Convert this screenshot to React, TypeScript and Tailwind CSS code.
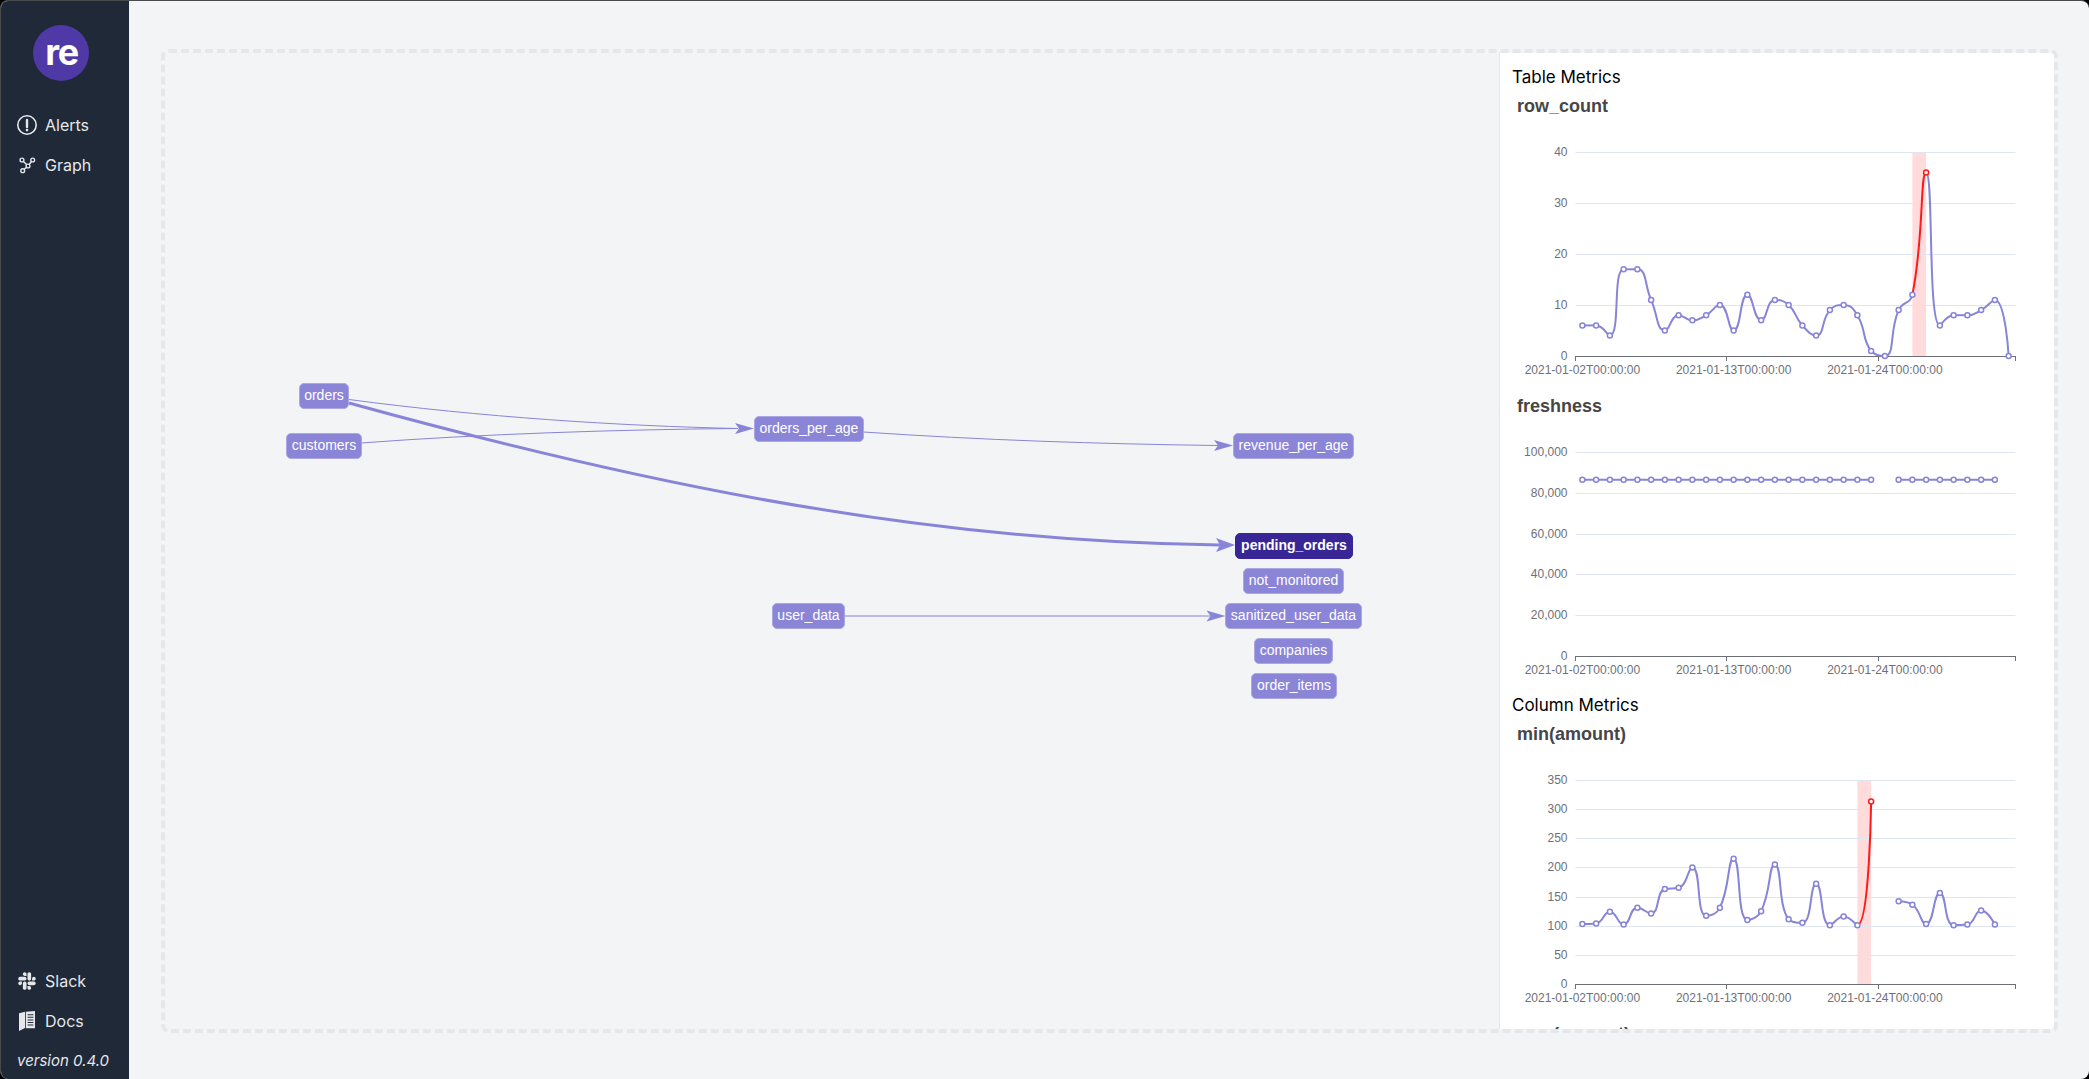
import { FaSlack } from 'react-icons/fa';

const BLUE = '#8884d8';
const RED = '#ff1a1a';

type Metric = {
  title: string;
  max: number;
  ticks: number[];
  values: (number | null)[];
  anomaly?: number;
};

const rowCount: (number | null)[] = [6, 6, 4, 17, 17, 11, 5, 8, 7, 8, 10, 5, 12, 7, 11, 10, 6, 4, 9, 10, 8, 1, 0, 9, 12, 36, 6, 8, 8, 9, 11, 0];
const freshness: (number | null)[] = Array.from({ length: 31 }, (_, i) => (i === 22 ? null : 86400));
const minAmount: (number | null)[] = [103, 104, 124, 102, 131, 121, 163, 165, 200, 117, 131, 215, 110, 125, 205, 111, 105, 172, 101, 116, 101, 313, null, 142, 136, 103, 156, 101, 102, 126, 102];

const CHARTS: Record<string, Metric> = {
  rowCount: { title: 'row_count', max: 40, ticks: [0, 10, 20, 30, 40], values: rowCount, anomaly: 25 },
  freshness: { title: 'freshness', max: 100000, ticks: [0, 20000, 40000, 60000, 80000, 100000], values: freshness },
  minAmount: { title: 'min(amount)', max: 350, ticks: [0, 50, 100, 150, 200, 250, 300, 350], values: minAmount, anomaly: 21 },
};

const AXIS_LEFT = 75.5;
const AXIS_RIGHT = 515.5;
const TOP = 65;
const BOTTOM = 269;
const STEP = 13.75;
const xOf = (i: number) => AXIS_LEFT + STEP / 2 + i * STEP;

// same control point maths as a smooth echarts line
function segments(points: [number, number][], smooth = 0.5) {
  const out: { from: [number, number]; c1: [number, number]; c2: [number, number]; to: [number, number] }[] = [];
  let cp0: [number, number] = points[0];
  for (let i = 1; i < points.length; i++) {
    const [x, y] = points[i];
    const [px, py] = points[i - 1];
    const next = points[i + 1];
    let cp1: [number, number] = [x, y];
    let nextCp: [number, number] = [x, y];
    if (next) {
      const [nx, ny] = next;
      const lenPrev = Math.hypot(x - px, y - py);
      const lenNext = Math.hypot(nx - x, ny - y);
      const ratio = lenNext / (lenNext + lenPrev || 1);
      let cx = x + (nx - px) * smooth * ratio;
      let cy = y + (ny - py) * smooth * ratio;
      cx = Math.max(Math.min(cx, Math.max(nx, x)), Math.min(nx, x));
      cy = Math.max(Math.min(cy, Math.max(ny, y)), Math.min(ny, y));
      let vx = cx - x;
      let vy = cy - y;
      let bx = x - (vx * lenPrev) / (lenNext || 1);
      let by = y - (vy * lenPrev) / (lenNext || 1);
      bx = Math.max(Math.min(bx, Math.max(px, x)), Math.min(px, x));
      by = Math.max(Math.min(by, Math.max(py, y)), Math.min(py, y));
      vx = x - bx;
      vy = y - by;
      cp1 = [bx, by];
      nextCp = [x + (vx * lenNext) / (lenPrev || 1), y + (vy * lenNext) / (lenPrev || 1)];
    }
    out.push({ from: points[i - 1], c1: cp0, c2: cp1, to: [x, y] });
    cp0 = nextCp;
  }
  return out;
}

function Chart({ metric }: { metric: Metric }) {
  const { title, max, ticks, values, anomaly } = metric;
  const yOf = (v: number) => BOTTOM - (v / max) * (BOTTOM - TOP);

  // split on the missing days, the line has a hole there
  const runs: { start: number; pts: [number, number][] }[] = [];
  values.forEach((v, i) => {
    if (v === null) return;
    const last = runs[runs.length - 1];
    if (last && last.start + last.pts.length === i) last.pts.push([xOf(i), yOf(v)]);
    else runs.push({ start: i, pts: [[xOf(i), yOf(v)]] });
  });

  return (
    <svg width="553" height="300" className="block shrink-0 font-['Liberation_Sans',sans-serif]">
      <text x="17" y="25" fontSize="18" fontWeight="700" fill="#464646">{title}</text>
      {anomaly !== undefined && (
        <rect x={xOf(anomaly - 1)} y={TOP} width={STEP} height={BOTTOM - TOP} fill="#ff0000" fillOpacity="0.14" />
      )}
      {ticks.map(t => (
        <g key={t}>
          {t > 0 && <line x1={AXIS_LEFT} x2={AXIS_RIGHT} y1={Math.round(yOf(t)) + 0.5} y2={Math.round(yOf(t)) + 0.5} stroke="#e0e6f1" />}
          <text x={AXIS_LEFT - 8} y={yOf(t) + 4} fontSize="12" textAnchor="end" fill="#6e7079">{t.toLocaleString('en-US')}</text>
        </g>
      ))}
      <line x1={AXIS_LEFT} x2={AXIS_RIGHT} y1={BOTTOM + 0.5} y2={BOTTOM + 0.5} stroke="#6e7079" />
      {[0, 11, 22, 32].map(i => {
        const x = Math.round(AXIS_LEFT + i * STEP - 0.5) + 0.5;
        return <line key={i} x1={x} x2={x} y1={BOTTOM} y2={BOTTOM + 5} stroke="#6e7079" />;
      })}
      {['2021-01-02T00:00:00', '2021-01-13T00:00:00', '2021-01-24T00:00:00'].map((label, i) => (
        <text key={label} x={xOf(i * 11)} y={BOTTOM + 18} fontSize="12" textAnchor="middle" fill="#6e7079">{label}</text>
      ))}
      {runs.map(run =>
        segments(run.pts).map((s, i) => {
          const isRed = anomaly !== undefined && run.start + i + 1 === anomaly;
          return (
            <path
              key={`${run.start}-${i}`}
              d={`M${s.from[0]} ${s.from[1]}C${s.c1[0]} ${s.c1[1]} ${s.c2[0]} ${s.c2[1]} ${s.to[0]} ${s.to[1]}`}
              fill="none"
              stroke={isRed ? RED : BLUE}
              strokeWidth="2"
            />
          );
        }),
      )}
      {runs.map(run =>
        run.pts.map(([x, y], i) => (
          <circle key={`${run.start}-${i}`} cx={x} cy={y} r="2.5" fill="#fff" stroke={run.start + i === anomaly ? RED : BLUE} strokeWidth="1.5" />
        )),
      )}
    </svg>
  );
}

function Arrow({ x, y, len = 19, half = 5.5 }: { x: number; y: number; len?: number; half?: number }) {
  return <polygon points={`${x},${y} ${x - len},${y - half} ${x - len + 4},${y} ${x - len},${y + half}`} fill={BLUE} />;
}

function Lineage() {
  return (
    <svg className="absolute inset-0" width="1334" height="976" viewBox="165 53 1334 976">
      <g fill="none" stroke={BLUE}>
        <path d="M349 399.5C480 417 620 426 738 428.5" />
        <path d="M361 443C480 434 620 429.5 738 428.5" />
        <path d="M863.5 432C980 440 1100 444 1218 445.5" />
        <path d="M845 616H1210" />
        <path d="M349 403C600 472 900 542 1220 545" strokeWidth="3" />
      </g>
      <Arrow x={754} y={428.5} />
      <Arrow x={1233} y={445.5} />
      <Arrow x={1235} y={545} len={19} half={7} />
      <Arrow x={1225.5} y={616} />
    </svg>
  );
}

function Node({ label, className }: { label: string; className: string }) {
  return (
    <div className={`absolute flex h-[25.5px] items-center justify-center rounded-[5px] border border-[#aaa7e4] bg-[#8b85d8] font-['Liberation_Sans',sans-serif] text-[14px] whitespace-nowrap text-white ${className}`}>
      {label}
    </div>
  );
}

function SideLink({ icon, label }: { icon: React.ReactNode; label: string }) {
  return (
    <a className="flex h-10 items-center gap-[7px] pl-[15px] text-base text-[#e5e7eb]">
      <span className="flex w-[22px] justify-center">{icon}</span>
      {label}
    </a>
  );
}

export default function App() {
  return (
    <div className="w-[2089px] bg-black">
      <div className="flex h-[1079px] overflow-hidden rounded-[8px] border-t border-l border-[#4a4a4a] bg-[#f3f4f6] font-['Inter',sans-serif]">
        <aside className="flex w-[128px] shrink-0 flex-col justify-between bg-[#1f2937]">
          <div>
            <div className="mt-[24px] ml-[32px] flex h-[56px] w-[56px] items-center justify-center rounded-full bg-[#4f39a6] pb-[2px] pl-[1px] text-[36px] leading-none font-bold tracking-[-0.04em] text-white">
              re
            </div>
            <nav className="mt-[24px] flex flex-col">
              <SideLink
                label="Alerts"
                icon={
                  <svg width="22" height="22" viewBox="0 0 22 22" fill="none" stroke="#e5e7eb" strokeWidth="1.6" strokeLinecap="round">
                    <circle cx="11" cy="11" r="9.2" />
                    <path d="M11 6v7" strokeWidth="2.4" />
                    <path d="M11 16v.1" strokeWidth="2.6" />
                  </svg>
                }
              />
              <SideLink
                label="Graph"
                icon={
                  <svg width="20" height="20" viewBox="0 0 20 20" fill="none" stroke="#e5e7eb" strokeWidth="1.4">
                    <circle cx="5" cy="5" r="1.9" />
                    <circle cx="15.7" cy="5" r="1.9" />
                    <circle cx="11" cy="11" r="1.9" />
                    <circle cx="5.7" cy="15.7" r="1.9" />
                    <path d="M6.4 6.4L9.6 9.6M14.5 6.5L12.2 9.5M9.6 12.3L7.1 14.4" />
                  </svg>
                }
              />
            </nav>
          </div>
          <div className="flex flex-col pb-[8px]">
            <SideLink label="Slack" icon={<FaSlack size={20} />} />
            <SideLink
              label="Docs"
              icon={
                <svg width="16" height="20" viewBox="0 0 16 20" fill="#e5e7eb">
                  <path d="M0 2.3L6 .8V17L0 20Z" />
                  <path fillRule="evenodd" d="M6.8 .8L16 0V17.3H6.8ZM8.6 3.2V4.2H14.4V3.2ZM8.6 5.8V6.8H14.4V5.8ZM8.6 8.4V9.4H14.4V8.4ZM8.6 11V12H14.4V11ZM8.6 13.6V14.6H14.4V13.6Z" />
                </svg>
              }
            />
            <span className="mt-[10px] pl-[16px] text-[15px] leading-[20px] text-[#e5e7eb] italic">version 0.4.0</span>
          </div>
        </aside>

        <main className="min-w-0 flex-1 pt-[48px] pr-[31px] pb-[46px] pl-[32px]">
          <div className="flex h-full overflow-hidden rounded-lg border-4 border-dashed border-[#e5e7eb]">
            <div className="relative min-w-0 flex-1">
              <Lineage />
              <Node label="orders" className="top-[330px] left-[134px] w-[50px]" />
              <Node label="customers" className="top-[380px] left-[121px] w-[76px]" />
              <Node label="orders_per_age" className="top-[363px] left-[589px] w-[110px]" />
              <Node label="revenue_per_age" className="top-[380px] left-[1068px] w-[121px]" />
              <Node label="pending_orders" className="top-[480px] left-[1070px] w-[118px] !border-[#392696] !bg-[#392696] font-bold" />
              <Node label="not_monitored" className="top-[515px] left-[1078px] w-[101px]" />
              <Node label="user_data" className="top-[550px] left-[607px] w-[73px]" />
              <Node label="sanitized_user_data" className="top-[550px] left-[1060px] w-[137px]" />
              <Node label="companies" className="top-[585px] left-[1089px] w-[79px]" />
              <Node label="order_items" className="top-[620px] left-[1086px] w-[86px]" />
            </div>
            <section className="flex w-[555px] shrink-0 flex-col overflow-hidden border-l border-[#e5e7eb] bg-white">
              <h3 className="pt-[14px] pl-[12px] text-[17px] leading-[20px] text-black">Table Metrics</h3>
              <Chart metric={CHARTS.rowCount} />
              <Chart metric={CHARTS.freshness} />
              <h3 className="pt-[8px] pl-[12px] text-[17px] leading-[20px] text-black">Column Metrics</h3>
              <Chart metric={CHARTS.minAmount} />
              {/* next chart starts right at the fold, only the title's top shows */}
              <p className="shrink-0 pt-[9px] pl-[17px] font-['Liberation_Sans',sans-serif] text-[18px] leading-[20px] font-bold text-[#464646]">max(amount)</p>
            </section>
          </div>
        </main>
      </div>
    </div>
  );
}
